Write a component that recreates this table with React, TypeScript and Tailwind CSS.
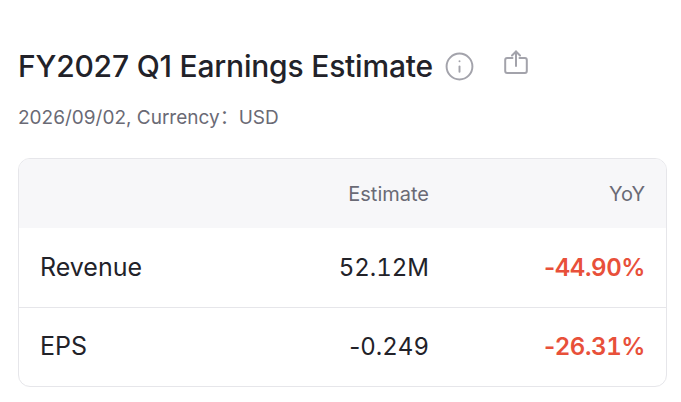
import { Info } from "lucide-react";

const rows = [
  { name: "Revenue", estimate: "52.12M", yoy: "-44.90%" },
  { name: "EPS", estimate: "-0.249", yoy: "-26.31%" },
];

function ShareIcon() {
  return (
    <svg viewBox="0 0 24 24" className="size-[24px]" fill="none" stroke="currentColor" strokeWidth="2" strokeLinecap="round" strokeLinejoin="round">
      <path d="M12 1.5V16" />
      <path d="M8 5.5 12 1.5l4 4" />
      <path d="M8.5 8H3.2a2 2 0 0 0-2 2v11a2 2 0 0 0 2 2h17.6a2 2 0 0 0 2-2V10a2 2 0 0 0-2-2h-5.3" />
    </svg>
  );
}

// keep the minus sign proportional, digits tabular
function Num({ value }: { value: string }) {
  const neg = value.startsWith("-");
  return (
    <>
      {neg && <span>-</span>}
      <span className="tabular-nums">{neg ? value.slice(1) : value}</span>
    </>
  );
}

export default function App() {
  return (
    <div className="min-h-[402px] bg-white pl-[18px] pr-[14px] pt-[48px] font-['Inter','Noto_Sans_CJK_SC',sans-serif] text-[#222229]">
      {/* Title */}
      <div className="flex items-center">
        <h1 className="text-[30px] font-medium leading-[36px] tracking-[-0.2px]">
          FY2027 Q1 Earnings Estimate
        </h1>
        <Info className="ml-[11px] size-[31px] text-[#a3a3ab]" strokeWidth={1.5} />
        <span className="ml-[29px] -mt-[8px] text-[#a3a3ab]">
          <ShareIcon />
        </span>
      </div>
      <p className="mt-[22px] text-[19px] leading-[24px] text-[#6a6a75]">
        2026/09/02, Currency：USD
      </p>

      {/* Table */}
      <div className="mt-[28px] overflow-hidden rounded-[12px] border border-[#e6e6ea]">
        <div className="grid h-[69px] grid-cols-[1fr_180px_216px] items-center bg-[#f7f7f9] px-[21px] text-[20px] text-[#6a6a75]">
          <span />
          <span className="text-right">Estimate</span>
          <span className="text-right">YoY</span>
        </div>
        {rows.map((r, i) => (
          <div
            key={r.name}
            className={`grid h-[79px] grid-cols-[1fr_180px_216px] items-center px-[21px] ${
              i > 0 ? "border-t border-[#e6e6ea]" : ""
            }`}
          >
            <span className="text-[25px]">{r.name}</span>
            <span className="text-right text-[24px]">
              <Num value={r.estimate} />
            </span>
            <span className="text-right text-[24px] font-semibold tracking-[-0.4px] text-[#e8503a]">
              <Num value={r.yoy} />
            </span>
          </div>
        ))}
      </div>
    </div>
  );
}
